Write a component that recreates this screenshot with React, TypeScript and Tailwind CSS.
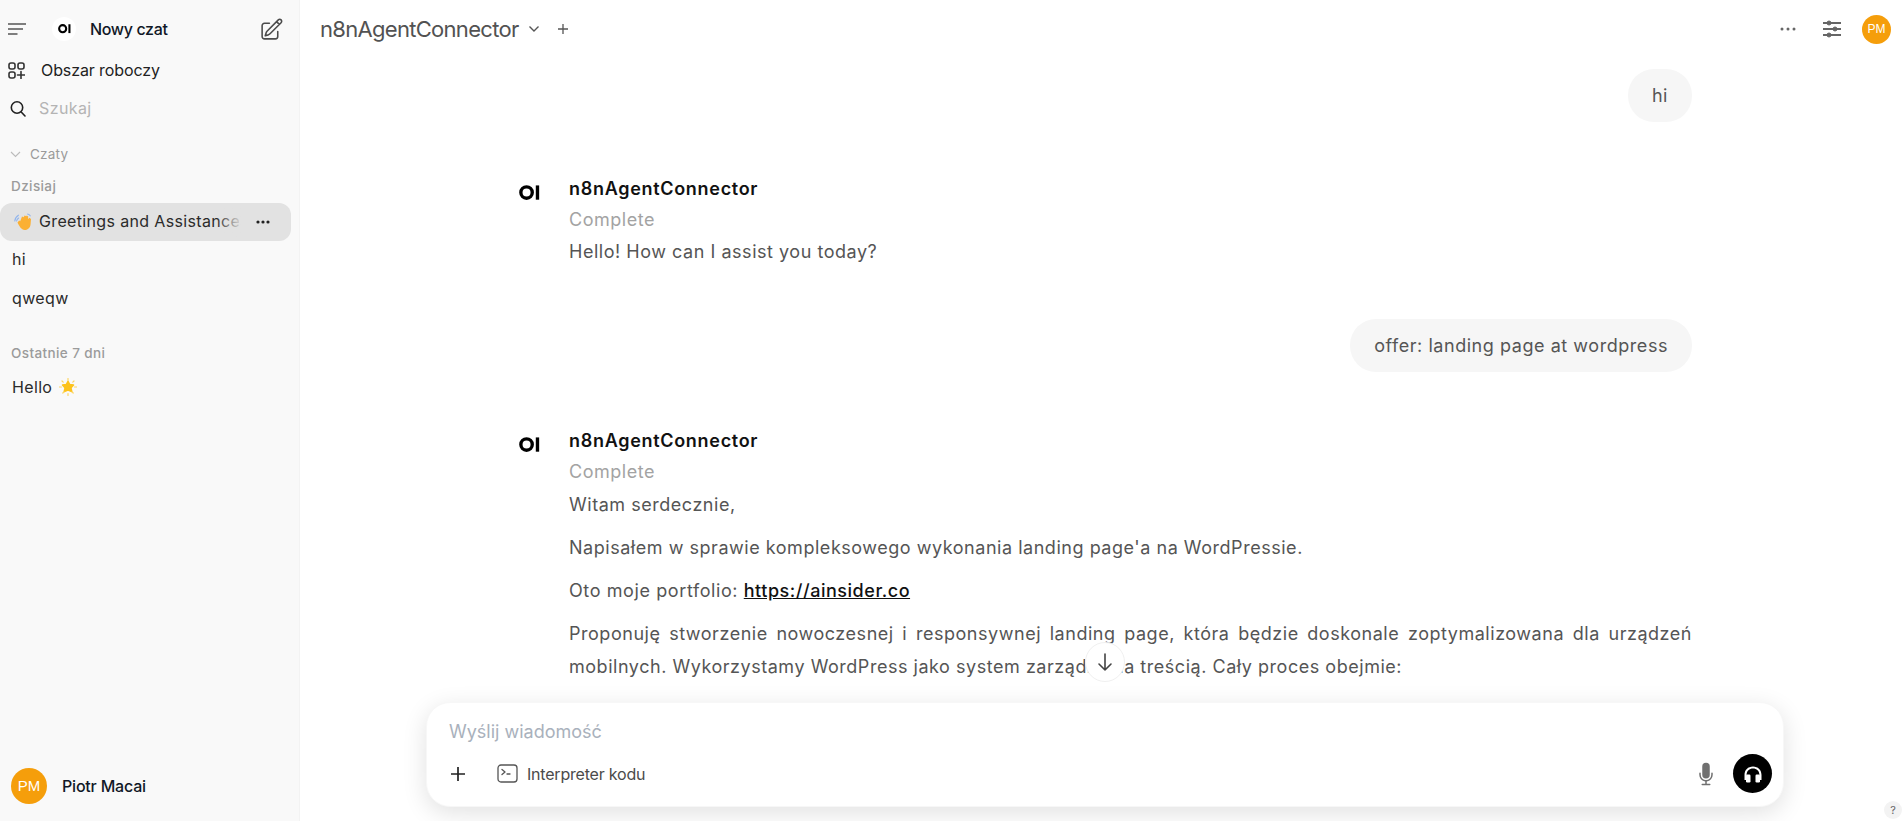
import React from "react";
import { HiOutlinePencilSquare, HiMicrophone } from "react-icons/hi2";

const font = { fontFamily: "Inter, 'Liberation Sans', sans-serif" };

function Logo({ size = 18, cls = "" }: { size?: number; cls?: string }) {
  return (
    <svg width={size} height={size * 0.72} viewBox="0 0 25 18" className={cls}>
      <circle cx="9" cy="9" r="6.8" fill="none" stroke="#000" strokeWidth="4" />
      <rect x="20" y="0.5" width="4" height="17" fill="#000" />
    </svg>
  );
}

function Wave() {
  return (
    <svg width="18" height="18" viewBox="0 0 18 18" className="shrink-0">
      <path d="M3.5 9.5 L5.2 7.5 L6.2 8.3 L8 3.5 L9.6 4.2 L10.6 2.4 L12.2 3.2 L12.8 2.6 L14.2 3.6 L14 6 L15.5 4.8 L17 6 L16.6 11 C16.4 14.6 13.8 17.2 10.6 17 C7.4 16.8 5.4 13.6 3.5 9.5Z" fill="#fbb034" />
      <path d="M0.8 8 C1 5.6 2.2 3.6 4.4 2.2 M2.6 8 C2.8 6.8 3.4 5.8 4.6 5 M13.6 1 C14.6 1.2 15.6 1.8 16.2 2.8" stroke="#8fb4ee" strokeWidth="1.1" strokeLinecap="round" fill="none" />
    </svg>
  );
}

function Star() {
  return (
    <svg width="18" height="18" viewBox="0 0 18 18">
      <path d="M9 3.5 L10.8 6.6 L14.5 7 L12 9.8 L12.8 13.6 L9 12 L5.2 13.6 L6 9.8 L3.5 7 L7.2 6.6Z" fill="#fcc21b" stroke="#fcc21b" strokeWidth="1.5" strokeLinejoin="round" />
      <path d="M9 0.5 V2.5 M9 15.5 V17.5 M0.5 9 H2.5 M15.5 9 H17.5 M3 3 L4.2 4.2 M15 3 L13.8 4.2 M3.8 15 L5 13.8 M14.2 15 L13 13.8" stroke="#fdd663" strokeWidth="1.2" strokeLinecap="round" />
    </svg>
  );
}

function Avatar({ cls }: { cls: string }) {
  return (
    <div className={`flex items-center justify-center rounded-full bg-[#f59e0b] text-white shrink-0 ${cls}`} style={{ fontFamily: "'Liberation Sans', sans-serif" }}>
      PM
    </div>
  );
}

function Sidebar() {
  return (
    <aside className="w-[300px] shrink-0 h-full bg-[#f9f9f9] flex flex-col border-r border-[#f3f3f3]">
      <div className="h-[58px] flex items-center pl-2 pr-[15px] shrink-0">
        <svg width="18" height="14" viewBox="0 0 18 14" fill="none" stroke="#555" strokeWidth="1.6">
          <path d="M0 2 H18 M0 7 H15 M0 12 H9.5" />
        </svg>
        <div className="ml-[26px] w-6 h-6 rounded-full bg-white flex items-center justify-center">
          <Logo size={13} />
        </div>
        <span className="ml-[14px] text-[16px] tracking-[-0.35px] text-[#111827] font-medium" style={font}>Nowy czat</span>
        <HiOutlinePencilSquare className="ml-auto text-[#4b4b4b]" size={25} />
      </div>
      <div className="h-[24px] flex items-center pl-2 shrink-0">
        <svg width="17" height="17" viewBox="0 0 17 17" fill="none" stroke="#333" strokeWidth="1.6">
          <rect x="1" y="1" width="6" height="6" rx="2" />
          <rect x="10" y="1" width="6" height="6" rx="2" />
          <rect x="1" y="10" width="6" height="6" rx="2" />
          <path d="M13 9.5 V16.5 M9.5 13 H16.5" strokeLinecap="round" />
        </svg>
        <span className="ml-[16px] text-[16px] tracking-[-0.1px] text-[#222]" style={font}>Obszar roboczy</span>
      </div>
      <div className="h-[24px] flex items-center pl-[10px] mt-[14px] shrink-0">
        <svg width="16" height="17" viewBox="0 0 16 17" fill="none" stroke="#222" strokeWidth="1.6" strokeLinecap="round">
          <circle cx="7" cy="7.5" r="5.7" />
          <path d="M11.2 12 L15 16" />
        </svg>
        <span className="ml-[13px] text-[16px] tracking-[0.4px] text-[#b4b4b4]" style={font}>Szukaj</span>
      </div>
      <div className="h-5 flex items-center pl-[10px] mt-[24px] shrink-0 text-[#9b9b9b]">
        <svg width="11" height="7" viewBox="0 0 11 7" fill="none" stroke="#bbb" strokeWidth="1.1"><path d="M1 1 L5.5 5.5 L10 1" /></svg>
        <span className="ml-[9px] text-[13.5px] tracking-[0.2px]" style={font}>Czaty</span>
      </div>
      <div className="pl-[11px] mt-[12px] h-5 flex items-center text-[13.5px] tracking-[0.4px] font-medium text-[#9b9b9b] shrink-0" style={font}>Dzisiaj</div>
      <div className="relative mt-[7px] h-[38px] w-[291px] rounded-xl bg-[#e2e2e2] flex items-center pl-[14px] pr-3 shrink-0" style={font}>
        <Wave />
        <span className="ml-[7px] w-[200px] overflow-hidden whitespace-nowrap text-[16px] tracking-[0.35px] leading-[24px] text-[#2b2b2b] -mt-[2px]">Greetings and Assistance</span>
        <span className="absolute left-[216px] w-[26px] h-[30px] bg-gradient-to-r from-transparent to-[#e2e2e2]"></span>
        <svg className="ml-auto mr-[9px]" width="14" height="4" viewBox="0 0 14 4" fill="#222"><circle cx="2" cy="2" r="1.6" /><circle cx="7" cy="2" r="1.6" /><circle cx="12" cy="2" r="1.6" /></svg>
      </div>
      <div className="h-[36px] flex items-center pl-3 text-[16px] tracking-[0.35px] text-[#2b2b2b] shrink-0" style={font}>hi</div>
      <div className="mt-[2px] h-[38px] flex items-center pl-3 text-[16px] tracking-[0.35px] text-[#2b2b2b] shrink-0" style={font}>qweqw</div>
      <div className="pl-[11px] mt-[26px] h-5 flex items-center text-[13.5px] tracking-[0.4px] font-medium text-[#9b9b9b] shrink-0" style={font}>Ostatnie 7 dni</div>
      <div className="mt-[5px] h-[38px] flex items-center pl-3 text-[16px] tracking-[0.35px] text-[#2b2b2b] shrink-0" style={font}>
        Hello
        <span className="ml-[7px] flex"><Star /></span>
      </div>
      <div className="mt-auto h-[70px] flex items-center pl-[11px] shrink-0">
        <Avatar cls="w-[36px] h-[36px] text-[15px]" />
        <span className="ml-[15px] text-[16px] tracking-[-0.2px] font-medium text-[#111827]" style={font}>Piotr Macai</span>
      </div>
    </aside>
  );
}

function Header() {
  return (
    <header className="h-[58px] shrink-0 flex items-center pl-[20px] pr-[11px]">
      <span className="text-[22px] tracking-[-0.7px] text-[#525252]" style={font}>n8nAgentConnector</span>
      <svg className="ml-[9px]" width="12" height="8" viewBox="0 0 12 8" fill="none" stroke="#555" strokeWidth="1.4"><path d="M1.5 1.5 L6 6 L10.5 1.5" /></svg>
      <svg className="ml-[17px]" width="12" height="12" viewBox="0 0 12 12" fill="none" stroke="#555" strokeWidth="1.3"><path d="M6 1 V11 M1 6 H11" /></svg>
      <svg className="ml-auto" width="16" height="4" viewBox="0 0 16 4" fill="#666"><circle cx="2" cy="2" r="1.5" /><circle cx="8" cy="2" r="1.5" /><circle cx="14" cy="2" r="1.5" /></svg>
      <svg className="ml-[26px]" width="20" height="18" viewBox="0 0 20 18" fill="#666" stroke="#666">
        <path d="M1 3 H19 M1 9 H19 M1 15 H19" strokeWidth="2" />
        <circle cx="7" cy="3" r="2" /><circle cx="13" cy="9" r="2" /><circle cx="7" cy="15" r="2" />
      </svg>
      <Avatar cls="ml-[20px] w-[29px] h-[29px] text-[12px]" />
    </header>
  );
}

function UserBubble({ children, cls }: { children: React.ReactNode; cls: string }) {
  return (
    <div className={`flex justify-end ${cls}`}>
      <div className="h-[53px] flex items-center px-6 rounded-[26px] bg-[#f6f6f6] text-[18px] tracking-[0.55px] text-[#555]">{children}</div>
    </div>
  );
}

function AgentHead() {
  return (
    <>
      <div className="text-[18px] leading-[28px] font-semibold tracking-[0.7px] text-[#111]">n8nAgentConnector</div>
      <div className="mt-[3px] text-[18px] leading-[28px] text-[#a3a3a3]">Complete</div>
    </>
  );
}

function Messages() {
  return (
    <div className="flex-1 min-h-0 relative overflow-hidden tracking-[0.53px]" style={font}>
      <div className="w-[1174px] ml-[218px]">
        <UserBubble cls="mt-[11px]">hi</UserBubble>
        <div className="flex mt-[53px]">
          <div className="w-[51px] shrink-0 pt-[10px] pl-[1px]"><Logo size={21} /></div>
          <div className="min-w-0 flex-1 text-[18px] text-[#555]">
            <AgentHead />
            <div className="leading-[28px] mt-[4px]">Hello! How can I assist you today?</div>
          </div>
        </div>
        <UserBubble cls="mt-[53px]">offer: landing page at wordpress</UserBubble>
        <div className="flex mt-[55px]">
          <div className="w-[51px] shrink-0 pt-[10px] pl-[1px]"><Logo size={21} /></div>
          <div className="min-w-0 flex-1 text-[18px] text-[#555]">
            <AgentHead />
            <p className="leading-[32px] mt-[3px]">Witam serdecznie,</p>
            <p className="leading-[32px] mt-[11px]">Napisałem w sprawie kompleksowego wykonania landing page'a na WordPressie.</p>
            <p className="leading-[32px] mt-[11px]"><span className="tracking-[0.6px]">Oto moje portfolio:</span> <span className="underline font-medium text-[#111]">https://ainsider.co</span></p>
            <p className="leading-[33px] mt-[10px] text-justify">Proponuję stworzenie nowoczesnej i responsywnej landing page, która będzie doskonale zoptymalizowana dla urządzeń mobilnych. Wykorzystamy WordPress jako system zarządzania treścią. Cały proces obejmie:</p>
          </div>
        </div>
      </div>
      <div className="absolute left-[785px] top-[584px] w-[40px] h-[40px] rounded-full bg-white border border-[#f0f0f0] flex items-center justify-center">
        <svg width="16" height="20" viewBox="0 0 16 20" fill="none" stroke="#444" strokeWidth="1.6" strokeLinecap="round" strokeLinejoin="round"><path d="M8 2 V18 M2 12 L8 18 L14 12" /></svg>
      </div>
    </div>
  );
}

function Composer() {
  return (
    <div className="shrink-0 h-[119px] bg-white pl-[126px] pr-[118px] relative" style={font}>
      <div className="h-[105px] rounded-[24px] bg-white border border-[#f7f7f7] shadow-[0_6px_24px_rgba(0,0,0,0.12)] pl-[22px] pr-[11px] flex flex-col">
        <div className="mt-[15px] text-[18px] leading-[28px] text-[#a9b1bc]">Wyślij wiadomość</div>
        <div className="flex items-center mt-[8px]">
          <svg className="ml-[1px]" width="16" height="16" viewBox="0 0 16 16" fill="none" stroke="#222" strokeWidth="1.7"><path d="M8 1 V15 M1 8 H15" /></svg>
          <svg className="ml-[31px]" width="21" height="19" viewBox="0 0 21 19" fill="none" stroke="#555" strokeWidth="1.3">
            <rect x="1" y="1" width="19" height="17" rx="3" />
            <path d="M5 5.5 L8 8 L5 10.5 M10 10 H13" strokeLinecap="round" strokeLinejoin="round" />
          </svg>
          <span className="ml-[9px] text-[16px] tracking-[-0.2px] text-[#4b4b4b]">Interpreter kodu</span>
          <HiMicrophone className="ml-auto text-[#707070]" size={24} />
          <div className="ml-[15px] w-[39px] h-[39px] rounded-full bg-black flex items-center justify-center">
            <svg width="20" height="18" viewBox="0 0 20 18" fill="#fff">
              <path d="M10 1.5 C5 1.5 1.5 5 1.5 10 V15 H3.6 V10 C3.6 6 6.4 3.6 10 3.6 C13.6 3.6 16.4 6 16.4 10 V15 H18.5 V10 C18.5 5 15 1.5 10 1.5Z" />
              <rect x="3" y="9.5" width="4.5" height="8" rx="1.2" />
              <rect x="12.5" y="9.5" width="4.5" height="8" rx="1.2" />
            </svg>
          </div>
        </div>
      </div>
      <div className="absolute right-0 bottom-[2px] w-[18px] h-[18px] rounded-full bg-[#f3f3f3] flex items-center justify-center text-[11px] text-[#666]">?</div>
    </div>
  );
}

export default function App() {
  return (
    <div className="w-[1902px] h-[821px] flex bg-white overflow-hidden">
      <Sidebar />
      <main className="flex-1 min-w-0 h-full flex flex-col">
        <Header />
        <Messages />
        <Composer />
      </main>
    </div>
  );
}
